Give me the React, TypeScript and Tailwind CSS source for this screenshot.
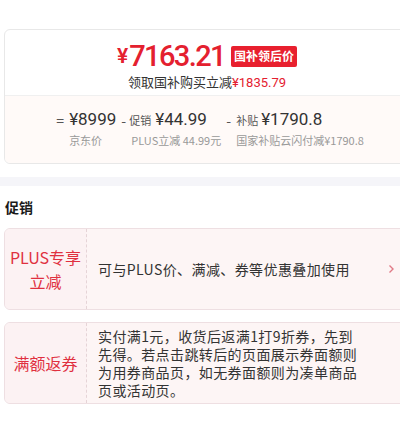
const cjk = { fontFamily: '"Noto Sans CJK SC", "Noto Sans", sans-serif' }
const num = { fontFamily: 'Roboto, "Noto Sans CJK SC", sans-serif' }

function Breakdown() {
  return (
    <div className="flex justify-center gap-[5px] pt-[13px] pl-[6px]">
      <div className="flex flex-col">
        <div className="flex items-center h-[22px] text-[#333]">
          <span className="w-[13px] text-[14px] text-[#555]">=</span>
          <span className="text-[17px]" style={num}>¥8999</span>
        </div>
        <div className="pl-[13px] h-[18px] leading-[18px] text-[11px] text-[#999]">京东价</div>
      </div>
      <div className="flex flex-col">
        <div className="flex items-center h-[22px] text-[#333]">
          <span className="w-[8px] text-[14px] text-[#555]">-</span>
          <span className="text-[11px] text-[#555] mr-[4px]">促销</span>
          <span className="text-[17px]" style={num}>¥44.99</span>
        </div>
        <div className="pl-[10px] h-[18px] leading-[18px] text-[11px] text-[#999]">PLUS立减 44.99元</div>
      </div>
      <div className="flex flex-col">
        <div className="flex items-center h-[22px] text-[#333]">
          <span className="w-[10px] text-[14px] text-[#555]">-</span>
          <span className="text-[11px] text-[#555] mr-[3px]">补贴</span>
          <span className="text-[17px]" style={num}>¥1790.8</span>
        </div>
        <div className="pl-[10px] h-[18px] leading-[18px] text-[11px] text-[#999]">国家补贴云闪付减¥1790.8</div>
      </div>
    </div>
  )
}

function PromoCard({ label, children, arrow }: { label: React.ReactNode; children: React.ReactNode; arrow?: boolean }) {
  return (
    <div className="flex w-[402px] h-[82px] border border-[#eedfe2] rounded-[6px] overflow-hidden bg-[#fdf5f5]">
      <div className="w-[82px] shrink-0 flex items-center justify-center text-center text-[16px] leading-[24px] text-[#e0303f] bg-[#fcf2f3] border-r border-dashed border-[#e6d4d7]">
        {label}
      </div>
      <div className="flex-1 flex items-center pl-[11px] pr-[8px]">
        <div className="w-[262px] text-[14px] leading-[18px] tracking-[0.4px] text-[#333]">{children}</div>
        {arrow && (
          <svg className="ml-auto mr-[2px]" width="7" height="10" viewBox="0 0 7 10">
            <path d="M1.5 1.5 L5 5 L1.5 8.5" fill="none" stroke="#e07a86" strokeWidth="1.4" />
          </svg>
        )}
      </div>
    </div>
  )
}

export default function App() {
  return (
    <div className="w-[400px] h-[427px] bg-white overflow-hidden" style={cjk}>
      <div className="pt-[29px] pl-[4px]">
        <div className="w-[406px] border border-[#e8e8e8] rounded-[6px] overflow-hidden">
          <div className="h-[65px] flex flex-col items-center pt-[12px]">
            <div className="flex items-center h-[28px]">
              <span className="text-[21px] leading-none font-semibold text-[#e4202f] mr-[1px]" style={num}>¥</span>
              <span className="text-[29px] leading-none font-medium tracking-[-1.6px] text-[#e4202f]" style={num}>7163.21</span>
              <span className="ml-[6px] h-[21px] px-[3px] flex items-center rounded-[2px] bg-[#e8202e] text-white text-[12px] font-bold leading-none">国补领后价</span>
            </div>
            <div className="mt-[4px] h-[16px] leading-[16px] text-[13px] text-[#333]">
              领取国补购买立减<span className="text-[#e4202f]" style={num}>¥1835.79</span>
            </div>
          </div>
          <div className="h-[68px] border-t border-[#f0f0f0] bg-[#fffaf8]">
            <Breakdown />
          </div>
        </div>
      </div>
      <div className="mt-[13px] h-[9px] bg-[#f5f5f9]" />
      <div className="pl-[5px] h-[42px] flex items-center text-[14px] font-bold text-[#1a1a1a]">促销</div>
      <div className="pl-[4px] flex flex-col gap-[12px]">
        <PromoCard label={<>PLUS专享<br />立减</>} arrow>
          可与PLUS价、满减、券等优惠叠加使用
        </PromoCard>
        <PromoCard label="满额返券">
          实付满1元，收货后返满1打9折券，先到先得。若点击跳转后的页面展示券面额则为用券商品页，如无券面额则为凑单商品页或活动页。
        </PromoCard>
      </div>
    </div>
  )
}
